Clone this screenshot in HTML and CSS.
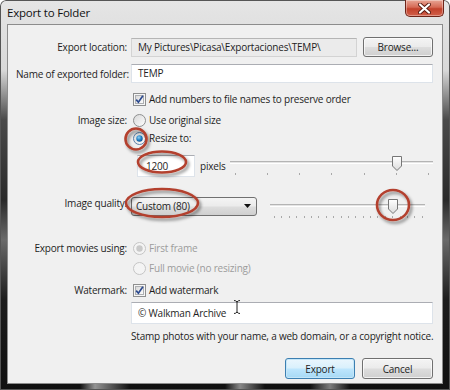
FILE: index.html
```html
<!DOCTYPE html>
<html lang="en">
<head>
    <meta charset="UTF-8">
    <title>Export to Folder</title>
    <link rel="stylesheet" href="styles.css">
</head>
<body>
    <svg class="defs" width="0" height="0">
        <defs>
            <linearGradient id="boxFill" x1="0" y1="0" x2="1" y2="1">
                <stop offset="0" stop-color="#d6d6d6"/>
                <stop offset="1" stop-color="#ffffff"/>
            </linearGradient>
            <radialGradient id="dotFill" cx="0.4" cy="0.35" r="0.7">
                <stop offset="0" stop-color="#8fd3f5"/>
                <stop offset="0.6" stop-color="#1b7bc2"/>
                <stop offset="1" stop-color="#0e4d8a"/>
            </radialGradient>
            <linearGradient id="thumbFill" x1="0" y1="0" x2="0" y2="1">
                <stop offset="0" stop-color="#ffffff"/>
                <stop offset="1" stop-color="#dcdcdc"/>
            </linearGradient>
            <filter id="shade" x="-30%" y="-30%" width="160%" height="160%">
                <feDropShadow dx="2" dy="2.5" stdDeviation="1.6" flood-color="#000" flood-opacity="0.45"/>
            </filter>
        </defs>
    </svg>

    <div class="window">
        <div class="titlebar">
            <span class="title">Export to Folder</span>
            <span class="close">
                <svg width="13" height="11" viewBox="0 0 13 11">
                    <path d="M2 1.5 L11 9.5 M11 1.5 L2 9.5" stroke="#5a1d14" stroke-width="4" stroke-linecap="round"/>
                    <path d="M2 1.5 L11 9.5 M11 1.5 L2 9.5" stroke="#ffffff" stroke-width="2.2" stroke-linecap="round"/>
                </svg>
            </span>
        </div>

        <div class="client">
            <div class="row r-loc">
                <label>Export location:</label>
                <div class="inline">
                    <div class="field readonly">My Pictures\Picasa\Exportaciones\TEMP\</div>
                    <button class="btn browse">Browse...</button>
                </div>
            </div>

            <div class="row r-name">
                <label>Name of exported folder:</label>
                <div class="field edit">TEMP</div>
            </div>

            <div class="row r-opt r-numbers">
                <span></span>
                <div class="option">
                    <svg class="box" width="13" height="13" viewBox="0 0 13 13">
                        <rect x="0.5" y="0.5" width="12" height="12" fill="#f6f6f6" stroke="#8e8f8f"/>
                        <rect x="2.5" y="2.5" width="8" height="8" fill="url(#boxFill)" stroke="#aeb0b3"/>
                        <path d="M3.2 6.6 L5.4 9.2 L9.9 2.8" fill="none" stroke="#2c4a8f" stroke-width="1.7"/>
                    </svg>
                    Add numbers to file names to preserve order
                </div>
            </div>

            <div class="row r-opt r-size">
                <label>Image size:</label>
                <div class="option">
                    <svg class="box" width="13" height="13" viewBox="0 0 13 13">
                        <circle cx="6.5" cy="6.5" r="6" fill="url(#boxFill)" stroke="#8e8f8f"/>
                    </svg>
                    Use original size
                </div>
            </div>

            <div class="row r-opt r-resize">
                <span></span>
                <div class="option">
                    <svg class="box" width="13" height="13" viewBox="0 0 13 13">
                        <circle cx="6.5" cy="6.5" r="6" fill="url(#boxFill)" stroke="#5b7fa8"/>
                        <circle cx="6.5" cy="6.5" r="3.2" fill="url(#dotFill)"/>
                    </svg>
                    Resize to:
                </div>
            </div>

            <div class="row r-pixels">
                <span></span>
                <div class="inline">
                    <div class="field edit px">1200</div>
                    <span class="unit">pixels</span>
                    <div class="slider size-slider">
                        <div class="track"></div>
                        <svg class="thumb" width="10" height="15" viewBox="0 0 10 15">
                            <path d="M0.5 0.5 H9.5 V10 L5 14.5 L0.5 10 Z" fill="url(#thumbFill)" stroke="#767676"/>
                        </svg>
                        <div class="ticks">
                            <i></i><i></i><i></i><i></i><i></i><i></i><i></i>
                        </div>
                    </div>
                </div>
            </div>

            <div class="row r-quality">
                <label>Image quality:</label>
                <div class="inline">
                    <div class="combo">
                        <span>Custom (80)</span>
                        <svg width="7" height="4" viewBox="0 0 7 4"><path d="M0 0 H7 L3.5 4 Z" fill="#111"/></svg>
                    </div>
                    <div class="slider quality-slider">
                        <div class="track"></div>
                        <svg class="thumb" width="10" height="15" viewBox="0 0 10 15">
                            <path d="M0.5 0.5 H9.5 V10 L5 14.5 L0.5 10 Z" fill="url(#thumbFill)" stroke="#767676"/>
                        </svg>
                        <div class="ticks">
                            <i></i><i></i><i></i><i></i><i></i><i></i><i></i><i></i><i></i><i></i><i></i>
                            <i></i><i></i><i></i><i></i><i></i><i></i><i></i><i></i><i></i><i></i>
                        </div>
                    </div>
                </div>
            </div>

            <div class="row r-opt r-movies">
                <label>Export movies using:</label>
                <div class="option disabled">
                    <svg class="box" width="13" height="13" viewBox="0 0 13 13">
                        <circle cx="6.5" cy="6.5" r="6" fill="#f4f4f4" stroke="#c4c4c4"/>
                        <circle cx="6.5" cy="6.5" r="3.2" fill="#c9c9c9"/>
                    </svg>
                    First frame
                </div>
            </div>

            <div class="row r-opt r-full">
                <span></span>
                <div class="option disabled">
                    <svg class="box" width="13" height="13" viewBox="0 0 13 13">
                        <circle cx="6.5" cy="6.5" r="6" fill="#f4f4f4" stroke="#c4c4c4"/>
                    </svg>
                    Full movie (no resizing)
                </div>
            </div>

            <div class="row r-opt r-mark">
                <label>Watermark:</label>
                <div class="option">
                    <svg class="box" width="13" height="13" viewBox="0 0 13 13">
                        <rect x="0.5" y="0.5" width="12" height="12" fill="#f6f6f6" stroke="#8e8f8f"/>
                        <rect x="2.5" y="2.5" width="8" height="8" fill="url(#boxFill)" stroke="#aeb0b3"/>
                        <path d="M3.2 6.6 L5.4 9.2 L9.9 2.8" fill="none" stroke="#2c4a8f" stroke-width="1.7"/>
                    </svg>
                    Add watermark
                </div>
            </div>

            <div class="row r-marktext">
                <span></span>
                <div class="field edit mark">© Walkman Archive</div>
            </div>

            <div class="row r-hint">
                <span></span>
                <p class="hint">Stamp photos with your name, a web domain, or a copyright notice.</p>
            </div>

            <div class="actions">
                <button class="btn default">Export</button>
                <button class="btn">Cancel</button>
            </div>
        </div>

        <!-- hand drawn highlights over the dialog -->
        <svg class="marks" width="450" height="390" viewBox="0 0 450 390">
            <g fill="none" stroke="#b3412f" stroke-width="2.6" filter="url(#shade)">
                <ellipse cx="136" cy="139" rx="10.5" ry="10.5"/>
                <ellipse cx="162" cy="162" rx="24" ry="10.5"/>
                <ellipse cx="162" cy="203" rx="36" ry="14"/>
                <ellipse cx="393" cy="205" rx="16" ry="15"/>
            </g>
            <path d="M234 300.5 Q236 300.5 237 302 Q238 300.5 240 300.5 M237 302 V312 M234 313.5 Q236 313.5 237 312 Q238 313.5 240 313.5" fill="none" stroke="#222" stroke-width="1"/>
        </svg>
    </div>
</body>
</html>
```

FILE: styles.css
```css
body {
    margin: 0;
    font-family: "Open Sans", "Noto Sans", sans-serif;
    font-size: 10px;
    letter-spacing: -0.2px;
    color: #1e1e1e;
}
.defs {
    position: absolute;
}
.window {
    position: relative;
    width: 450px;
    height: 390px;
    border-radius: 6px 6px 0 0;
    background:
        linear-gradient(90deg, transparent 80px, rgba(255,255,255,0.55) 95px, transparent 130px, transparent 225px, rgba(255,255,255,0.5) 240px, transparent 265px, transparent 310px, rgba(255,255,255,0.45) 330px, transparent 350px) 0 384px / 450px 6px no-repeat,
        linear-gradient(180deg, #e5e5e5 0, #d9d9d9 70px, #4a4a4a 120px, #2a2a2a 200px, #6a6a6a 240px, #1c1c1c 300px, #101010 100%);
    box-shadow: inset 0 0 0 1px #555;
    overflow: hidden;
}
.titlebar {
    height: 24px;
    display: flex;
    justify-content: space-between;
    align-items: flex-start;
    padding: 0 6px 0 7px;
}
.title {
    font-size: 11.5px;
    line-height: 26px;
    color: #111;
}
.close {
    width: 39px;
    height: 17px;
    box-sizing: border-box;
    border: 1px solid #6e2418;
    border-top: none;
    border-radius: 0 0 5px 5px;
    background: linear-gradient(180deg, #e8a595 0, #d66a55 45%, #c2412b 55%, #d2604a 100%);
    box-shadow: inset 0 0 0 1px rgba(255,255,255,0.35);
    display: flex;
    align-items: center;
    justify-content: center;
}
.client {
    margin: 0 7px;
    height: 360px;
    box-sizing: border-box;
    border: 1px solid #8c8c8c;
    background: #f0f0f0;
    padding: 12px 9px 0 8px;
}
.row {
    display: grid;
    grid-template-columns: 111px 1fr;
    column-gap: 4px;
    align-items: center;
}
.row label {
    text-align: right;
    white-space: nowrap;
}
.inline {
    display: flex;
    align-items: center;
}
.field {
    box-sizing: border-box;
    height: 19px;
    line-height: 17px;
    padding: 0 6px;
    border: 1px solid #dde3ea;
    border-top-color: #abadb3;
    background: #fff;
    white-space: nowrap;
    overflow: hidden;
}
.field.readonly {
    width: 226px;
    background: #ebebeb;
    border-color: #d3d3d3;
    border-top-color: #b5b5b5;
}
.btn {
    box-sizing: border-box;
    font: inherit;
    letter-spacing: inherit;
    color: #1e1e1e;
    height: 20px;
    padding: 0;
    border: 1px solid #707070;
    border-radius: 3px;
    background: linear-gradient(180deg, #f4f4f4 0, #ebebeb 48%, #dddddd 52%, #cfcfcf 100%);
    box-shadow: inset 0 0 0 1px rgba(255,255,255,0.7);
}
.btn.browse {
    width: 70px;
    margin-left: 6px;
}
.r-name {
    margin-top: 7px;
}
.r-opt {
    height: 14px;
}
.option {
    display: flex;
    align-items: center;
    gap: 3px;
    padding-left: 2px;
    white-space: nowrap;
}
.option.disabled {
    color: #9c9c9c;
}
.r-numbers {
    margin-top: 9px;
}
.r-size {
    margin-top: 7px;
}
.r-resize {
    margin-top: 4px;
}
.r-pixels {
    margin-top: 10px;
}
.field.px {
    width: 58px;
    height: 22px;
    line-height: 20px;
    margin-left: 6px;
    padding: 0 8px;
}
.unit {
    margin-left: 5px;
}
.slider {
    position: relative;
}
.track {
    position: absolute;
    left: 0;
    right: 0;
    height: 3px;
    box-sizing: border-box;
    border-top: 1px solid #b4b4b4;
    border-bottom: 1px solid #ffffff;
    background: #e4e4e4;
}
.thumb {
    position: absolute;
}
.ticks {
    position: absolute;
    display: flex;
    justify-content: space-between;
}
.ticks i {
    width: 1px;
    height: 2px;
    background: #a9a9a9;
}
.size-slider {
    width: 203px;
    height: 22px;
    margin-left: auto;
}
.size-slider .track {
    top: 6px;
}
.size-slider .thumb {
    left: 162px;
    top: 1px;
}
.size-slider .ticks {
    left: 5px;
    right: 4px;
    top: 18px;
}
.r-quality {
    margin-top: 17px;
    align-items: start;
}
.r-quality label {
    line-height: 19px;
}
.combo {
    box-sizing: border-box;
    width: 126px;
    height: 19px;
    border: 1px solid #707070;
    border-radius: 3px;
    background: linear-gradient(180deg, #f4f4f4 0, #ebebeb 48%, #dddddd 52%, #cfcfcf 100%);
    display: flex;
    align-items: center;
    justify-content: space-between;
    padding: 0 5px 0 4px;
}
.quality-slider {
    width: 155px;
    height: 24px;
    margin-left: 13px;
    align-self: flex-start;
}
.quality-slider .track {
    top: 10px;
}
.quality-slider .thumb {
    left: 118px;
    top: 5px;
}
.quality-slider .ticks {
    left: 4px;
    right: 2px;
    top: 22px;
}
.r-movies {
    margin-top: 23px;
}
.r-full {
    margin-top: 6px;
}
.r-mark {
    margin-top: 8px;
}
.r-marktext {
    margin-top: 5px;
}
.field.mark {
    height: 22px;
    line-height: 20px;
}
.r-hint {
    margin-top: 5px;
}
.hint {
    margin: 0;
    line-height: 14px;
    white-space: nowrap;
}
.actions {
    margin-top: 15px;
    display: flex;
    justify-content: flex-end;
    gap: 7px;
}
.actions .btn {
    width: 71px;
    height: 21px;
}
.btn.default {
    width: 70px;
    border-color: #3c7fb1;
    background: linear-gradient(180deg, #eaf6fd 0, #d9f0fc 48%, #bee6fd 52%, #a7d9f5 100%);
    box-shadow: inset 0 0 0 1px #c5e6f8;
}
.marks {
    position: absolute;
    left: 0;
    top: 0;
    pointer-events: none;
}
```
